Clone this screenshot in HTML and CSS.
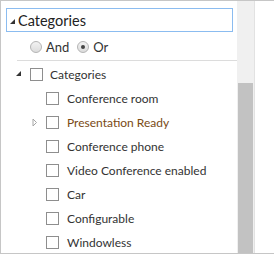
FILE: index.html
```html
<!DOCTYPE html>
<html lang="en">
  <head>
    <meta charset="UTF-8" />
    <title>Categories filter</title>
    <link rel="stylesheet" href="styles.css">
  </head>
  <body>
    <div class="panel">
      <div class="content">
        <div class="search-box">
          <svg class="arrow" width="6" height="6" viewBox="0 0 6 6"><path d="M5 0 L5 5 L0 5 Z" fill="#333"/></svg>
          <span class="search-text">Categories</span>
        </div>

        <div class="mode">
          <label class="radio"><span class="dot"></span>And</label>
          <label class="radio checked"><span class="dot"></span>Or</label>
        </div>

        <div class="tree">
          <div class="row root">
            <span class="expander"><svg width="6" height="6" viewBox="0 0 6 6"><path d="M5 0 L5 5 L0 5 Z" fill="#333"/></svg></span>
            <span class="box"></span>
            <span class="label">Categories</span>
          </div>
          <div class="row child">
            <span class="expander"></span>
            <span class="box"></span>
            <span class="label">Conference room</span>
          </div>
          <div class="row child">
            <span class="expander"><svg width="6" height="9" viewBox="0 0 6 9"><path d="M1 1 L4.5 4.5 L1 8 Z" fill="none" stroke="#a6a6a6"/></svg></span>
            <span class="box"></span>
            <span class="label hover">Presentation Ready</span>
          </div>
          <div class="row child">
            <span class="expander"></span>
            <span class="box"></span>
            <span class="label">Conference phone</span>
          </div>
          <div class="row child">
            <span class="expander"></span>
            <span class="box"></span>
            <span class="label">Video Conference enabled</span>
          </div>
          <div class="row child">
            <span class="expander"></span>
            <span class="box"></span>
            <span class="label">Car</span>
          </div>
          <div class="row child">
            <span class="expander"></span>
            <span class="box"></span>
            <span class="label">Configurable</span>
          </div>
          <div class="row child">
            <span class="expander"></span>
            <span class="box"></span>
            <span class="label">Windowless</span>
          </div>
        </div>
      </div>

      <div class="scrollbar">
        <div class="thumb"></div>
      </div>

      <div class="side"></div>
    </div>
  </body>
</html>
```

FILE: styles.css
```css
* {
  margin: 0;
  padding: 0;
  box-sizing: border-box;
}

body {
  font-family: "Lato", "Noto Sans", sans-serif;
  font-size: 12px;
  color: #333;
  background-color: white;
}

.panel {
  display: flex;
  height: 254px;
  border-top: 1px solid #c6c6c6;
  border-left: 1px solid #c6c6c6;
  border-bottom: 1px solid #c6c6c6;
}

.content {
  width: 236px;
  overflow: hidden;
}

.search-box {
  display: flex;
  align-items: center;
  height: 24px;
  margin: 7px 4px 0 5px;
  border: 1px solid #8bbcf0;
  padding-left: 3px;
}

.search-box .arrow {
  margin-top: 3px;
  margin-right: 2px;
}

.search-text {
  font-size: 14.5px;
  color: #222;
}

.mode {
  display: flex;
  align-items: center;
  gap: 8px;
  height: 29px;
  margin-left: 16px;
  padding-left: 13px;
  padding-top: 1px;
  border-bottom: 1px solid #dcdcdc;
}

.radio {
  display: flex;
  align-items: center;
  gap: 4px;
  font-size: 13px;
}

.dot {
  width: 12px;
  height: 12px;
  border-radius: 50%;
  border: 1px solid #b4b4b4;
  background: linear-gradient(#f2f2f2, #dcdcdc);
  display: flex;
  align-items: center;
  justify-content: center;
}

.radio.checked .dot::after {
  content: "";
  width: 4px;
  height: 4px;
  border-radius: 50%;
  background-color: #444;
}

.tree {
  padding-top: 1px;
}

.row {
  display: flex;
  align-items: center;
  height: 24px;
}

.expander {
  width: 14px;
  display: flex;
  align-items: center;
}

.root {
  padding-left: 15px;
}

.child {
  padding-left: 31px;
}

.box {
  width: 13px;
  height: 13px;
  border: 1px solid #8e8e8e;
  background-color: white;
  margin-right: 7px;
}

.child .box {
  margin-right: 8px;
}

.label {
  white-space: nowrap;
}

.label.hover {
  color: #7a4a14;
}

.scrollbar {
  width: 17px;
  background-color: #f0f0f0;
  padding: 82px 1px 0 1px;
}

.thumb {
  height: 100%;
  background-color: #c2c2c2;
}

.side {
  flex: 1;
  border-left: 1px solid #e2e2e2;
}
```
